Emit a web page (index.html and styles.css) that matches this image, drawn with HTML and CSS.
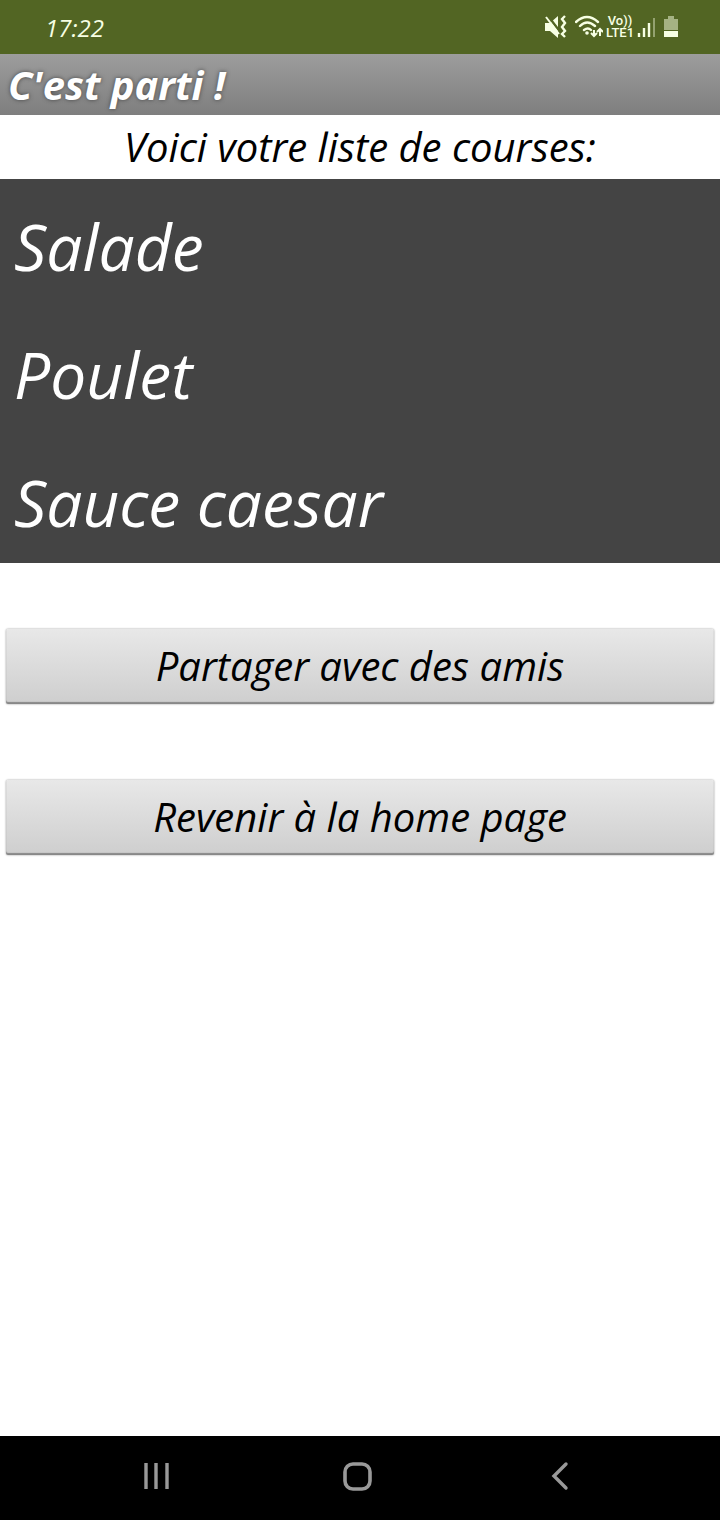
FILE: index.html
```html
<!DOCTYPE html>
<html lang="fr">
<head>
<meta charset="utf-8">
<meta name="viewport" content="width=device-width, initial-scale=1">
<title>C'est parti !</title>
<link rel="stylesheet" href="styles.css">
</head>
<body>
<div class="status-bar">
  <time class="clock">17:22</time>
  <div class="status-icons">
    <svg class="icon-mute" viewBox="0 0 22 24" aria-hidden="true">
      <path d="M0 8h5l8-7v22l-8-7H0z" fill="currentColor"/>
      <path d="M3 1l13 17" stroke="#526523" stroke-width="2.4"/>
      <path d="M1 2l13 17" stroke="currentColor" stroke-width="2"/>
      <path d="M20 1l-3 3 3 4-3 4 3 4-3 3 3 3" fill="none" stroke="currentColor" stroke-width="2.4"/>
    </svg>
    <svg class="icon-wifi" viewBox="0 0 28 24" aria-hidden="true">
      <g fill="none" stroke="currentColor" stroke-width="2.4" stroke-linecap="round">
        <path d="M1 7q11-10 22 0M5 11q7-7 15 0M9 15q4-3 7 0"/>
      </g>
      <circle cx="12" cy="18" r="1.8" fill="currentColor"/>
      <path d="M19 15v6M16 18l3 3 3-3M25 21v-7M22 17l3-3 3 3" fill="none" stroke="currentColor" stroke-width="2"/>
    </svg>
    <div class="network"><span>Vo))</span><span>LTE1</span></div>
    <svg class="icon-signal" viewBox="0 0 19 24" aria-hidden="true">
      <path d="M2 18v4M7 13v9M12 8v14" stroke="currentColor" stroke-width="2.4"/>
      <path d="M17 3v19" stroke="currentColor" stroke-width="2" opacity=".4"/>
    </svg>
    <svg class="icon-battery" viewBox="0 0 14 24" aria-hidden="true">
      <path d="M4 1h6v3h4v11H0V4h4z" fill="currentColor" opacity=".5"/>
      <path d="M0 16h14v6H0z" fill="currentColor"/>
    </svg>
  </div>
</div>
<header class="title-bar"><h1 class="title">C'est parti !</h1></header>
<main class="content">
  <h2 class="subtitle">Voici votre liste de courses:</h2>
  <ul class="list">
    <li class="item">Salade</li>
    <li class="item">Poulet</li>
    <li class="item">Sauce caesar</li>
  </ul>
  <div class="actions">
    <button class="action" type="button">Partager avec des amis</button>
    <button class="action" type="button">Revenir à la home page</button>
  </div>
</main>
<nav class="nav-bar" aria-label="Navigation">
  <button class="nav-button" type="button" aria-label="Récents">
    <svg class="nav-icon" viewBox="0 0 32 32"><path d="M7 3v26M17 3v26M28 3v26" stroke="currentColor" stroke-width="3.4"/></svg>
  </button>
  <button class="nav-button" type="button" aria-label="Accueil">
    <svg class="nav-icon" viewBox="0 0 32 32"><rect x="4" y="4" width="25" height="25" rx="8" fill="none" stroke="currentColor" stroke-width="3.6"/></svg>
  </button>
  <button class="nav-button" type="button" aria-label="Retour">
    <svg class="nav-icon" viewBox="0 0 32 32"><path d="M23 4L11 16l12 12" fill="none" stroke="currentColor" stroke-width="3.4" stroke-linecap="round"/></svg>
  </button>
</nav>
</body>
</html>
```
FILE: styles.css
```css
* {
  box-sizing: border-box;
}

body {
  margin: 0;
  min-height: 100vh;
  display: flex;
  flex-direction: column;
  background: #fff;
  color: #000;
  font-family: "Open Sans", "Noto Sans", sans-serif;
  font-style: italic;
  font-weight: 500;
}

.status-bar {
  display: flex;
  align-items: center;
  justify-content: space-between;
  height: 54px;
  padding: 0 42px 0 45px;
  background: #526523;
  color: #f7ffe4;
}

.clock {
  font-size: 24px;
}

.status-icons {
  display: flex;
  align-items: center;
}

.status-icons svg {
  height: 24px;
}

.icon-mute {
  width: 22px;
  margin-right: 8px;
}

.icon-wifi {
  width: 28px;
  margin-right: 3px;
}

.network {
  display: flex;
  flex-direction: column;
  align-items: center;
  width: 28px;
  margin-right: 3px;
  font: 500 13px/12px Roboto, sans-serif;
}

.icon-signal {
  width: 19px;
  margin-right: 8px;
}

.icon-battery {
  width: 14px;
}

.title-bar {
  padding: 0 8px;
  background: linear-gradient(#9d9d9d, #7e7e7e);
}

.title {
  margin: 0;
  color: #fff;
  font-size: 40px;
  line-height: 61px;
  text-shadow: 0 0 4px #444;
}

.content {
  flex: 1;
}

.subtitle {
  margin: 0;
  font-size: 40px;
  font-weight: 500;
  line-height: 64px;
  text-align: center;
}

.list {
  margin: 0;
  padding: 0 14px;
  list-style: none;
  background: #444;
  color: #fff;
}

.item {
  padding-top: 8px;
  font-size: 64px;
  line-height: 120px;
}

.actions {
  display: flex;
  flex-direction: column;
  gap: 76px;
  padding: 66px 6px;
}

.action {
  height: 75px;
  padding: 0 8px 2px;
  border: 0;
  border-radius: 2px;
  background: linear-gradient(#e8e8e8, #cecece);
  box-shadow: inset 0 -2px 1px #888, 0 0 2px #888;
  color: #000;
  font: inherit;
  font-size: 40px;
}

.nav-bar {
  display: flex;
  justify-content: center;
  gap: 42px;
  padding-right: 6px;
  height: 84px;
  background: #000;
}

.nav-button {
  display: flex;
  align-items: center;
  justify-content: center;
  width: 160px;
  padding: 0 0 4px;
  border: 0;
  background: none;
  color: #999;
}

.nav-icon {
  width: 32px;
  height: 32px;
}
```
